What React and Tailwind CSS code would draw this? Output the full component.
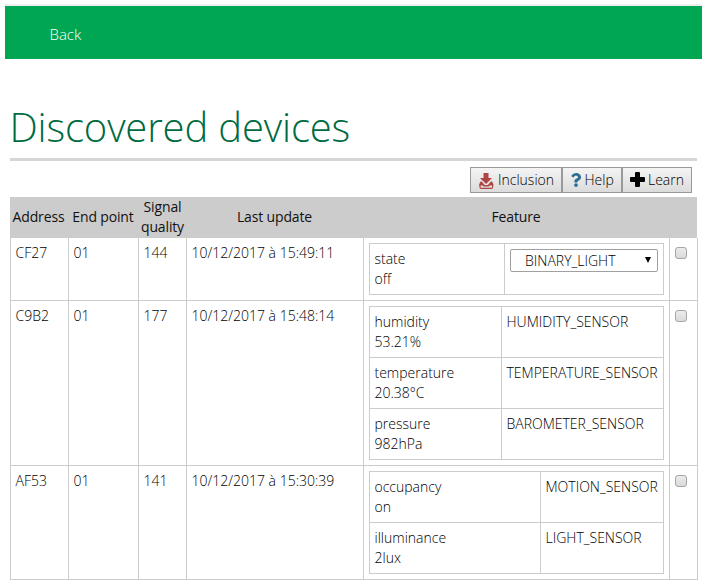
import React from "react";
import { FaQuestion } from "react-icons/fa";

const devices = [
  {
    address: "CF27", endpoint: "01", quality: "144", updated: "10/12/2017 à 15:49:11",
    cols: "grid-cols-[135px_1fr]", height: "h-[63px]",
    features: [{ name: "state", value: "off", type: "BINARY_LIGHT", select: true }],
  },
  {
    address: "C9B2", endpoint: "01", quality: "177", updated: "10/12/2017 à 15:48:14",
    cols: "grid-cols-[132px_1fr]", height: "h-[165px]",
    features: [
      { name: "humidity", value: "53.21%", type: "HUMIDITY_SENSOR" },
      { name: "temperature", value: "20.38°C", type: "TEMPERATURE_SENSOR" },
      { name: "pressure", value: "982hPa", type: "BAROMETER_SENSOR" },
    ],
  },
  {
    address: "AF53", endpoint: "01", quality: "141", updated: "10/12/2017 à 15:30:39",
    cols: "grid-cols-[171px_1fr]", height: "h-[114px]",
    features: [
      { name: "occupancy", value: "on", type: "MOTION_SENSOR" },
      { name: "illuminance", value: "2lux", type: "LIGHT_SENSOR" },
    ],
  },
];

function InclusionIcon() {
  return (
    <svg className="mt-[3px] h-4 w-[15px] shrink-0" viewBox="0 0 15 16">
      <path d="M4.5 0h5v5h3.500L7 11 1 5h3.500z" fill="#b04343" />
      <path d="M1 11v3q0 1.300 1.200 1.300h10.200q1.200 0 1.200-1.300v-3" fill="none" stroke="#b04343" strokeWidth="1.200" />
      <path d="M1.600 8.600h1.200l1.600 1.800 1.200 1.500h3.400l1.200-1.500 1.600-1.800H13l1.200 2.200v1.700H10.800l-1 1H4.700l-1-1H.4v-1.700z" fill="#b04343" />
      <path d="M3.300 8 7.200 12 11.200 8" fill="none" stroke="#e8e8e8" strokeWidth=".8" />
    </svg>
  );
}

function PlusIcon() {
  return (
    <svg className="ml-[7px] h-[15px] w-[15px] shrink-0" viewBox="0 0 15 15">
      <path d="M6 0h3q1 0 1 1v4h4q1 0 1 1v3q0 1-1 1h-4v4q0 1-1 1H6q-1 0-1-1v-4H1q-1 0-1-1V6q0-1 1-1h4V1q0-1 1-1z" />
    </svg>
  );
}

function ToolButton({ width, children }) {
  return (
    <button className={`flex h-[26px] ${width} items-center border border-[#999] bg-linear-to-b from-[#f4f4f4] to-[#dcdcdc] pb-px text-sm font-light text-black`}>
      {children}
    </button>
  );
}

function Select({ value }) {
  return (
    <div className="ml-[0.5px] flex h-[23px] w-[148px] items-center justify-between rounded-[2px] border border-[#a0a0a0] bg-white pr-[6px] pl-[14px]">
      <span>{value}</span>
      <svg className="mb-[2px] h-[6px] w-[6px]" viewBox="0 0 6 6"><path d="M0 0h6L3 6z" /></svg>
    </div>
  );
}

function DeviceRow({ device }) {
  return (
    <div className={`grid grid-cols-[58px_70px_48px_177px_306px_29px] border-r border-b border-[#ccc] ${device.height}`}>
      <div className="border-l border-[#ccc] pt-[5px] pl-[4.5px]">{device.address}</div>
      <div className="border-l border-[#ccc] pt-[5px] pl-[4.5px]">{device.endpoint}</div>
      <div className="border-l border-[#ccc] pt-[5px] pl-[4.5px]">{device.quality}</div>
      <div className="border-l border-[#ccc] pt-[5px] pl-[4.5px]">{device.updated}</div>
      <div className="border-l border-[#ccc] p-[5px]">
        <div className="border-t border-l border-[#ccc]">
          {device.features.map((f) => (
            <div key={f.name} className={`grid h-[51px] ${device.cols}`}>
              <div className="border-r border-b border-[#ccc] pt-[5px] pl-[4.5px]">
                <div>{f.name}</div>
                <div>{f.value}</div>
              </div>
              <div className="border-r border-b border-[#ccc] pt-[5px] pl-[4.5px]">
                {f.select ? <Select value={f.type} /> : f.type}
              </div>
            </div>
          ))}
        </div>
      </div>
      <div className="border-l border-[#ccc] pt-[9px] pl-[5px]">
        <div className="h-3 w-3 rounded-[3px] border border-[#a5a5a5] bg-linear-to-b from-[#ececec] to-[#dadada]" />
      </div>
    </div>
  );
}

export default function App() {
  return (
    <div className="h-[587px] w-[706px] overflow-hidden bg-white pt-1 font-['Open_Sans',sans-serif] text-sm leading-5 font-light text-black">
      <nav className="ml-[5px] flex h-[55px] w-[697px] items-center border-t-2 border-[#eee] bg-[#00a651] pt-[2px] pl-[44.500px] text-[15px] text-white">
        Back
      </nav>
      <main className="ml-[10px] w-[688px]">
        <h1 className="-ml-[0.5px] flex h-[102px] items-end pb-[7px] text-[40px] leading-[54px] font-light tracking-[-0.15px] text-[#006b3f]">
          Discovered devices
        </h1>
        <div className="-mt-[3px] h-[3px] w-[687px] bg-[#d6d6d6]" />
        <div className="flex h-9 justify-end pt-[6px] pr-[6px]">
          <ToolButton width="w-[92px]">
            <span className="ml-[8px]"><InclusionIcon /></span>
            <span className="ml-1">Inclusion</span>
          </ToolButton>
          <ToolButton width="w-[60px]">
            <FaQuestion className="ml-[7px] h-[14px] w-[12px] text-[#2d6e94]" />
            <span className="ml-[2.5px]">Help</span>
          </ToolButton>
          <ToolButton width="w-[70px]">
            <PlusIcon />
            <span className="ml-[3px]">Learn</span>
          </ToolButton>
        </div>
        <div className="grid h-[41px] w-[687px] grid-cols-[57px_72px_47px_177px_306px_28px] items-center bg-[#ccc] pb-[2px] text-center font-normal tracking-[-0.15px] text-[#111]">
          <div>Address</div>
          <div>End point</div>
          <div>Signal quality</div>
          <div>Last update</div>
          <div>Feature</div>
        </div>
        {devices.map((d) => <DeviceRow key={d.address} device={d} />)}
      </main>
    </div>
  );
}
